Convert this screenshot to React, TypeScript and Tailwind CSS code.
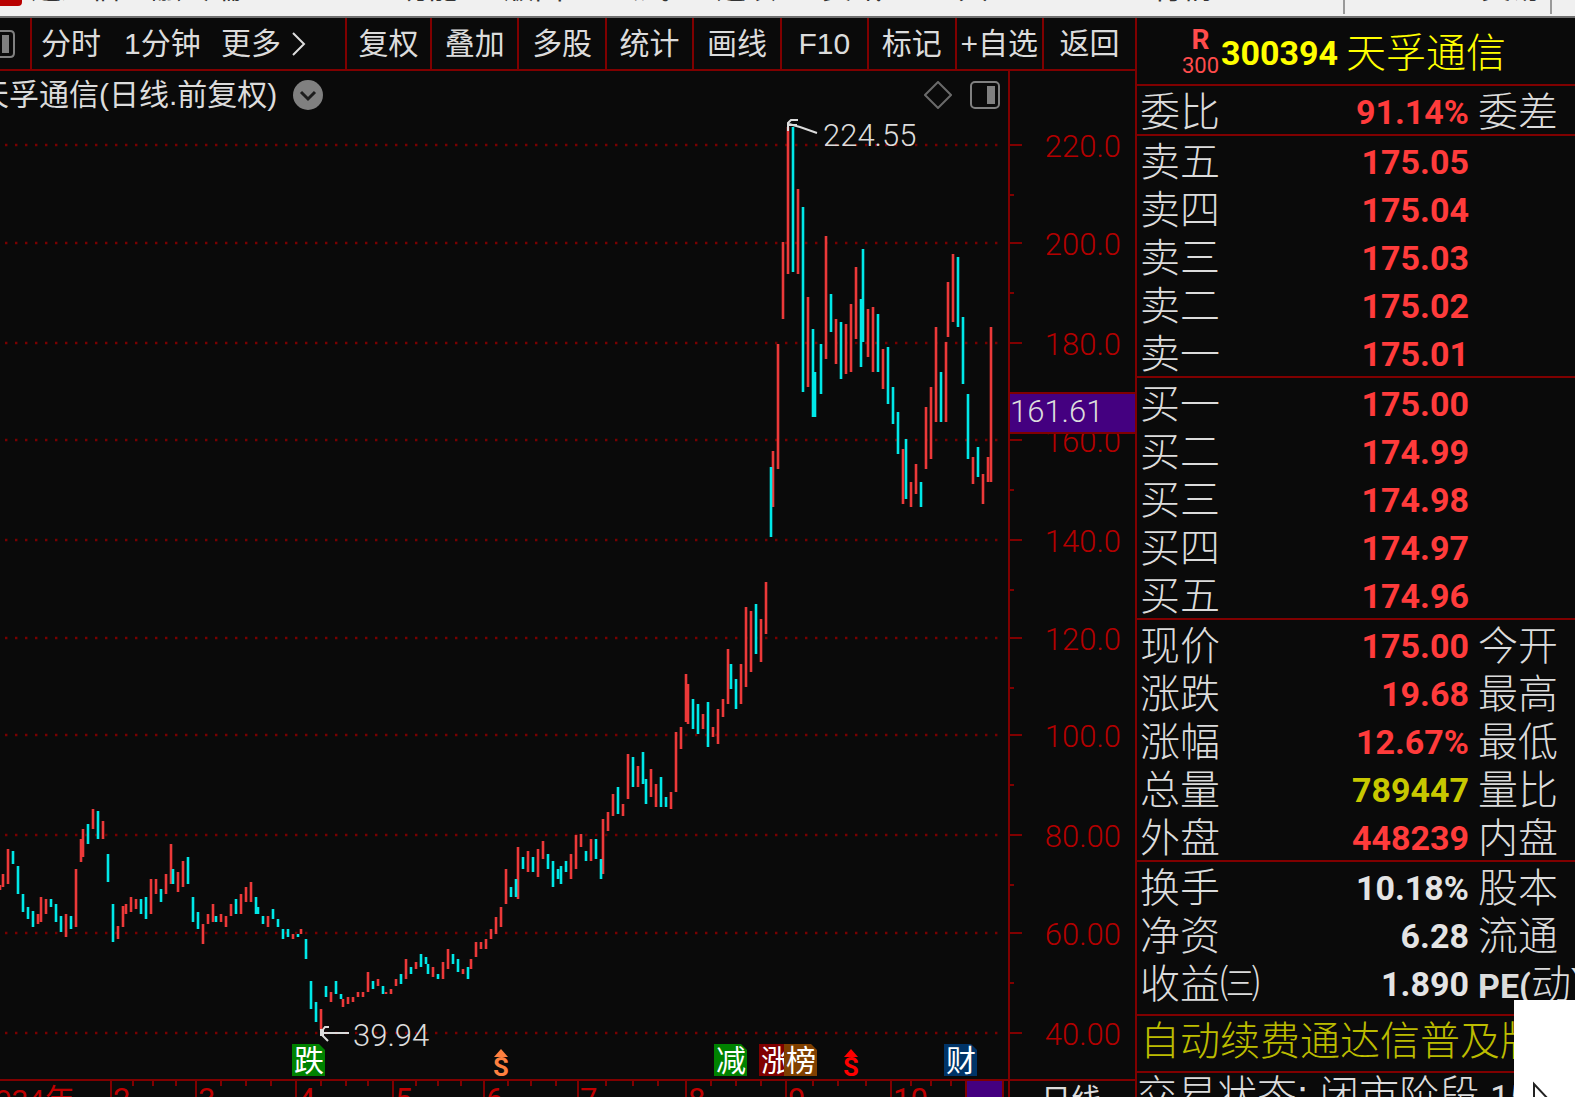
import type { ReactNode } from 'react';

type Tone = 'red' | 'yellow' | 'white';
type QuoteRow = { label: string; value: string; tone: Tone; next?: ReactNode };

const toneClass: Record<Tone, string> = {
  red: 'text-[#ff3b3b]',
  yellow: 'text-[#c8c800]',
  white: 'text-[#e4e4e4]',
};

const menuGroups = ['功能', '版面', '公式', '选项', '资讯', '工具'];
const tools = ['叠加', '多股', '统计', '画线', 'F10', '标记', '+自选'];

const sellRows: QuoteRow[] = [
  { label: '卖五', value: '175.05', tone: 'red' },
  { label: '卖四', value: '175.04', tone: 'red' },
  { label: '卖三', value: '175.03', tone: 'red' },
  { label: '卖二', value: '175.02', tone: 'red' },
  { label: '卖一', value: '175.01', tone: 'red' },
];

const buyRows: QuoteRow[] = [
  { label: '买一', value: '175.00', tone: 'red' },
  { label: '买二', value: '174.99', tone: 'red' },
  { label: '买三', value: '174.98', tone: 'red' },
  { label: '买四', value: '174.97', tone: 'red' },
  { label: '买五', value: '174.96', tone: 'red' },
];

const priceRows: QuoteRow[] = [
  { label: '现价', value: '175.00', tone: 'red', next: '今开' },
  { label: '涨跌', value: '19.68', tone: 'red', next: '最高' },
  { label: '涨幅', value: '12.67%', tone: 'red', next: '最低' },
  { label: '总量', value: '789447', tone: 'yellow', next: '量比' },
  { label: '外盘', value: '448239', tone: 'red', next: '内盘' },
];

const basicRows: QuoteRow[] = [
  { label: '换手', value: '10.18%', tone: 'white', next: '股本' },
  { label: '净资', value: '6.28', tone: 'white', next: '流通' },
  {
    label: '收益㈢',
    value: '1.890',
    tone: 'white',
    next: (
      <>
        <span className="font-[Roboto] text-[34px] font-bold">PE(</span>动)
      </>
    ),
  },
];

// x, high, low of each day; rising days and falling days are drawn separately
const upBars = [
  [0, 885, 890], [3, 874, 887], [8, 849, 884], [38, 914, 924], [41, 897, 922], [46, 899, 914],
  [66, 914, 937], [76, 869, 927], [81, 839, 862], [83, 829, 857], [93, 809, 829], [103, 821, 839],
  [118, 926, 939], [123, 906, 927], [126, 904, 914], [131, 897, 912], [136, 899, 909], [151, 879, 914],
  [156, 879, 894], [166, 874, 894], [171, 844, 884], [178, 872, 892], [183, 861, 887], [203, 924, 944],
  [208, 914, 924], [213, 904, 922], [221, 914, 922], [226, 916, 927], [231, 904, 916], [241, 894, 914],
  [246, 887, 902], [251, 882, 902], [268, 916, 927], [293, 934, 939], [301, 929, 934], [321, 1009, 1030],
  [331, 992, 1002], [343, 999, 1007], [348, 997, 1004], [353, 997, 1002], [358, 992, 997], [363, 992, 997],
  [368, 972, 992], [378, 979, 986], [386, 992, 994], [391, 989, 994], [396, 979, 986], [406, 959, 979],
  [416, 962, 969], [433, 967, 977], [443, 962, 979], [448, 949, 969], [463, 969, 974], [471, 959, 969],
  [476, 942, 957], [481, 942, 949], [486, 939, 949], [491, 929, 939], [496, 917, 934], [501, 907, 927],
  [506, 869, 904], [518, 847, 899], [528, 851, 872], [538, 849, 877], [543, 841, 859], [571, 854, 879],
  [576, 835, 869], [581, 834, 847], [591, 839, 861], [603, 819, 874], [608, 812, 831], [613, 794, 816],
  [623, 804, 816], [628, 754, 799], [638, 766, 787], [651, 769, 797], [656, 784, 807], [671, 792, 809],
  [676, 732, 792], [681, 727, 749], [686, 674, 722], [688, 684, 724], [703, 714, 729], [713, 727, 737],
  [718, 709, 744], [723, 699, 717], [728, 649, 704], [741, 664, 704], [746, 607, 687], [751, 611, 672],
  [761, 619, 662], [766, 582, 634], [773, 451, 507], [778, 344, 469], [783, 242, 319], [788, 127, 274],
  [798, 189, 274], [808, 297, 387], [826, 236, 359], [836, 319, 364], [846, 324, 374], [851, 304, 372],
  [856, 267, 339], [868, 309, 357], [873, 307, 372], [883, 349, 389], [903, 449, 504], [911, 482, 507],
  [916, 464, 494], [926, 407, 469], [931, 387, 459], [936, 327, 422], [946, 342, 422], [948, 282, 337],
  [953, 254, 322], [973, 457, 484], [983, 474, 504], [988, 457, 482], [991, 327, 482],
];

const downBars = [
  [13, 851, 864], [18, 866, 894], [23, 894, 912], [28, 907, 919], [33, 911, 927], [51, 899, 907],
  [56, 904, 922], [61, 916, 932], [71, 916, 929], [88, 824, 844], [98, 811, 839], [108, 854, 882],
  [113, 904, 942], [141, 899, 914], [146, 897, 919], [161, 889, 902], [173, 869, 884], [188, 857, 884],
  [193, 897, 922], [198, 912, 929], [216, 916, 922], [236, 899, 914], [256, 897, 914], [258, 907, 914],
  [263, 916, 924], [273, 909, 919], [278, 919, 927], [283, 929, 939], [288, 929, 937], [298, 934, 937],
  [306, 939, 959], [311, 981, 1009], [316, 1002, 1022], [326, 986, 997], [336, 981, 994], [341, 994, 999],
  [373, 981, 989], [383, 986, 994], [401, 974, 984], [411, 967, 974], [421, 954, 967], [426, 957, 964],
  [428, 964, 974], [438, 974, 979], [453, 954, 964], [458, 959, 972], [468, 967, 979], [511, 887, 897],
  [516, 879, 897], [523, 857, 869], [533, 857, 872], [548, 854, 869], [553, 861, 887], [558, 869, 879],
  [561, 866, 884], [566, 861, 872], [586, 851, 861], [596, 839, 859], [601, 859, 879], [618, 787, 814],
  [633, 757, 787], [643, 752, 784], [646, 779, 804], [661, 777, 807], [666, 797, 807], [693, 699, 729],
  [698, 704, 734], [708, 702, 747], [731, 664, 689], [736, 679, 709], [756, 604, 654], [771, 467, 537],
  [793, 127, 272], [803, 207, 392], [813, 329, 417], [815, 372, 417], [821, 344, 394], [831, 294, 332],
  [841, 322, 379], [861, 299, 367], [863, 249, 342], [878, 314, 372], [888, 347, 404], [893, 387, 424],
  [898, 412, 454], [906, 439, 499], [921, 482, 507], [941, 372, 422], [958, 257, 327], [963, 317, 384],
  [968, 394, 459], [978, 447, 477],
];

const scale = [
  { y: 145, text: '220.0' },
  { y: 243, text: '200.0' },
  { y: 343, text: '180.0' },
  { y: 440, text: '160.0' },
  { y: 540, text: '140.0' },
  { y: 638, text: '120.0' },
  { y: 735, text: '100.0' },
  { y: 835, text: '80.00' },
  { y: 933, text: '60.00' },
  { y: 1033, text: '40.00' },
];
const halfSteps = [195, 293, 393, 490, 590, 688, 785, 885, 983];

const months = [
  { x: 111, text: '2' },
  { x: 196, text: '3' },
  { x: 296, text: '4' },
  { x: 393, text: '5' },
  { x: 484, text: '6' },
  { x: 578, text: '7' },
  { x: 686, text: '8' },
  { x: 786, text: '9' },
  { x: 891, text: '10' },
];
const weeks = [
  133, 153, 176, 221, 246, 271, 321, 346, 368, 416, 438, 461, 508, 531, 556, 606, 633, 658, 711, 736,
  761, 813, 838, 866, 911, 931, 951,
];

const flags = [
  { x: 292, text: '跌', fill: '#008200' },
  { x: 714, text: '减', fill: '#008200' },
  { x: 759, text: '涨', fill: '#800000' },
  { x: 784, text: '榜', fill: '#804000' },
  { x: 944, text: '财', fill: '#003468' },
];
const dividends = [
  { x: 501, fill: '#ff8040' },
  { x: 851, fill: '#ff0000' },
];

const toPath = (bars: number[][]) =>
  bars.map(([x, high, low]) => `M${x} ${high}V${low}`).join('');

function MenuBar() {
  return (
    <header className="h-[18px] shrink-0 overflow-hidden border-b-2 border-[#707070] bg-[#f0f0f0] text-[#333]">
      <div className="flex h-4 items-start">
        <div className="h-[6px] w-[22px] rounded-br-sm bg-[#b80000]" />
        <div className="-mt-7 ml-[9px] w-[367px] shrink-0 text-[30px] leading-[32px]">
          通达信金融终端
        </div>
        <nav className="-mt-7 flex flex-1 gap-[46px] text-[30px] leading-[32px] whitespace-nowrap">
          {menuGroups.map((item) => (
            <a key={item} href="#menu">
              {item}
            </a>
          ))}
        </nav>
        <div className="-mt-7 w-[190px] text-[30px] leading-[32px]">行情</div>
        <div className="h-[14px] w-[2px] bg-[#999]" />
        <div className="-mt-7 w-[205px] pl-[136px] text-[30px] leading-[32px]">交易</div>
        <div className="h-[14px] w-[2px] bg-[#999]" />
        <div className="w-[23px]" />
      </div>
    </header>
  );
}

function Toolbar() {
  return (
    <div className="flex h-[53px] shrink-0 border-b-2 border-[#800000] text-[30px] leading-[50px] whitespace-nowrap text-[#dcdcdc]">
      <button aria-label="侧栏" className="flex w-[32px] shrink-0 items-center border-r-2 border-[#800000]">
        <svg width="15" height="28" viewBox="0 0 15 28" fill="none">
          <path d="M-6 1H10Q14 1 14 5V23Q14 27 10 27H-6" stroke="#808080" strokeWidth="2" />
          <path d="M2 5H9V23H2Z" fill="#808080" />
        </svg>
      </button>
      <div className="flex w-[315px] shrink-0 border-r-2 border-[#800000] pl-[9px]">
        <button className="w-[83px] text-left">分时</button>
        <button className="w-[97px] text-left">1分钟</button>
        <button className="flex items-center gap-[11px]">
          更多
          <svg width="14" height="24" viewBox="0 0 14 24" fill="none">
            <path d="M1 1L12 12L1 23" stroke="#dcdcdc" strokeWidth="2" />
          </svg>
        </button>
      </div>
      <button className="w-[85px] shrink-0 border-r-2 border-[#800000]">复权</button>
      {tools.map((tool) => (
        <button key={tool} className="min-w-0 flex-1 border-r-2 border-[#800000]">
          {tool}
        </button>
      ))}
      <button className="w-[91px] shrink-0">返回</button>
    </div>
  );
}

function ChartTitle() {
  return (
    <div className="flex h-12 shrink-0 items-center pr-[8px] text-[30px] whitespace-nowrap text-[#dcdcdc]">
      <h1 className="-ml-[21px] text-[30px] leading-[46px]">天孚通信(日线.前复权)</h1>
      <button aria-label="更多周期" className="ml-4">
        <svg width="30" height="30" viewBox="0 0 30 30" fill="none">
          <circle cx="15" cy="15" r="15" fill="#808080" />
          <path d="M8 12L15 19L22 12" stroke="#1c1c1c" strokeWidth="3" />
        </svg>
      </button>
      <div className="ml-auto flex gap-[18px]">
        <button aria-label="标注">
          <svg width="28" height="28" viewBox="0 0 28 28" fill="none">
            <path d="M14 1L27 14L14 27L1 14Z" stroke="#6a6a6a" strokeWidth="2" />
          </svg>
        </button>
        <button aria-label="右侧栏">
          <svg width="30" height="28" viewBox="0 0 30 28" fill="none">
            <rect x="1" y="1" width="28" height="26" rx="4" stroke="#808080" strokeWidth="2" />
            <path d="M17 5H25V23H17Z" fill="#808080" />
          </svg>
        </button>
      </div>
    </div>
  );
}

function PriceChart() {
  return (
    <svg
      viewBox="0 119 1008 960"
      preserveAspectRatio="xMinYMin meet"
      className="min-h-0 w-full flex-1"
      fill="none"
    >
      {scale.map(({ y }) => (
        <path key={y} d={`M5 ${y}H998`} stroke="#780000" strokeWidth="2.4" strokeDasharray="2.4 7.6" />
      ))}
      <path d={toPath(upBars)} stroke="#ec3939" strokeWidth="2.6" />
      <path d={toPath(downBars)} stroke="#00e8e8" strokeWidth="2.6" />

      <path d="M798 120H791L788 123V131M789 124L800 127L817 133" stroke="#dcdcdc" strokeWidth="2" />
      <path d="M788 125H797" stroke="#dcdcdc" strokeWidth="2" />
      <text x="823" y="146" className="fill-[#dcdcdc] font-[Roboto] text-[31px] font-light">
        224.55
      </text>
      <path d="M322 1033H349M329 1027H325L322 1031M322 1035L328 1041" stroke="#dcdcdc" strokeWidth="2" />
      <path d="M320 1029H324V1036H320Z" fill="#dcdcdc" />
      <text x="353" y="1046" className="fill-[#dcdcdc] font-[Roboto] text-[31px] font-light">
        39.94
      </text>

      {flags.map(({ x, text, fill }) => (
        <g key={text}>
          <path d={`M${x} 1044H${x + 27}L${x + 33} 1050V1076H${x}Z`} fill={fill} />
          <text x={x + 2} y="1071" className="fill-white text-[30px]">
            {text}
          </text>
        </g>
      ))}
      {dividends.map(({ x, fill }) => (
        <g key={x} fill={fill}>
          <path d={`M${x} 1049L${x + 7} 1057H${x - 7}Z`} />
          <text x={x} y="1076" textAnchor="middle" className="font-[Roboto] text-[25px] font-bold">
            S
          </text>
        </g>
      ))}
    </svg>
  );
}

function PriceScale() {
  return (
    <svg
      viewBox="1010 71 125 1008"
      preserveAspectRatio="xMinYMin meet"
      className="w-[127px] shrink-0 border-l-2 border-[#800000]"
      fill="none"
    >
      {scale.map(({ y, text }) => (
        <g key={text}>
          <path d={`M1009 ${y}H1022`} stroke="#800000" strokeWidth="2" />
          <text
            x="1121"
            y={y + 12}
            textAnchor="end"
            className="fill-[#b40000] font-[Roboto] text-[31px] font-light"
          >
            {text}
          </text>
        </g>
      ))}
      {halfSteps.map((y) => (
        <path key={y} d={`M1009 ${y}H1014`} stroke="#800000" strokeWidth="2" />
      ))}
      <path d="M1008 393H1136V433H1008Z" fill="#440080" stroke="#800000" strokeWidth="2" />
      <text x="1010" y="422" className="fill-[#dcdcdc] font-[Roboto] text-[31px] font-light">
        161.61
      </text>
    </svg>
  );
}

function TimeAxis() {
  return (
    <div className="flex h-[18px] shrink-0 overflow-hidden border-t-2 border-[#800000]">
      <svg viewBox="0 1081 1008 16" preserveAspectRatio="xMinYMin meet" className="min-w-0 flex-1">
        <text x="-22" y="1110" className="fill-[#c00000] text-[30px]">
          2024年
        </text>
        {months.map(({ x, text }) => (
          <g key={x}>
            <path d={`M${x} 1081V1097`} stroke="#800000" strokeWidth="2" />
            <text x={x + 2} y="1110" className="fill-[#c00000] font-[Roboto] text-[31px]">
              {text}
            </text>
          </g>
        ))}
        {weeks.map((x) => (
          <path key={x} d={`M${x} 1081V1086`} stroke="#800000" strokeWidth="2" />
        ))}
        <path d="M966 1081H1003V1097H966Z" fill="#440080" />
        <path d="M966 1081V1097M1003 1081V1097" stroke="#800000" strokeWidth="2" />
      </svg>
      <button className="flex w-[127px] shrink-0 border-l-2 border-[#800000] pl-[31px] text-[30px] leading-[38px] text-[#dcdcdc]">
        日线
      </button>
    </div>
  );
}

function QuoteTable({ rows, className = '' }: { rows: QuoteRow[]; className?: string }) {
  return (
    <div className={`border-b-2 border-[#800000] ${className}`}>
      <table className="w-full table-fixed text-[40px] leading-[52px] whitespace-nowrap text-[#dcdcdc]">
        <tbody>
          {rows.map(({ label, value, tone, next }) => (
            <tr key={label} className="h-12">
              <th scope="row" className="h-12 w-[130px] p-0 pl-[3px] text-left font-light">
                <div className="h-12">{label}</div>
              </th>
              <td className={`h-12 p-0 pr-[9px] text-right font-[Roboto] text-[34px] font-bold ${toneClass[tone]}`}>
                <div className="h-12">{value}</div>
              </td>
              <th scope="row" className="h-12 w-[97px] p-0 text-left font-light">
                <div className="h-12">{next}</div>
              </th>
            </tr>
          ))}
        </tbody>
      </table>
    </div>
  );
}

function QuotePanel() {
  return (
    <aside className="w-[440px] shrink-0 overflow-hidden border-l-2 border-[#800000] whitespace-nowrap">
      <div className="flex h-[68px] items-center border-b-2 border-[#800000] pt-1 pl-[43px] text-[#ffff00]">
        <div className="flex w-[41px] flex-col items-center font-[Roboto] leading-[26px] text-[#ff4c4c]">
          <b className="text-[28px]">R</b>
          <span className="text-[22px]">300</span>
        </div>
        <b className="font-[Roboto] text-[34px]">300394</b>
        <h2 className="ml-2 text-[40px] leading-[64px] font-light">天孚通信</h2>
      </div>
      <QuoteTable rows={[{ label: '委比', value: '91.14%', tone: 'red', next: '委差' }]} />
      <QuoteTable rows={sellRows} />
      <QuoteTable rows={buyRows} />
      <QuoteTable rows={priceRows} />
      <QuoteTable rows={basicRows} className="pb-2" />
      <p className="h-[57px] border-b-2 border-[#800000] pl-[3px] text-[40px] leading-[50px] font-light text-[#bcbc00]">
        自动续费通达信普及版
      </p>
      <p className="text-[40px] leading-[44px] font-light text-[#dcdcdc]">
        交易状态: 闭市阶段 <b className="font-[Roboto] text-[34px]">15:00</b>
      </p>
    </aside>
  );
}

export default function App() {
  return (
    <div className="relative flex h-screen flex-col overflow-hidden bg-[#0a0a0a] font-['Liberation_Sans','Noto_Sans_CJK_SC',sans-serif]">
      <MenuBar />
      <div className="flex min-h-0 flex-1">
        <main className="flex min-w-0 flex-1 flex-col">
          <Toolbar />
          <div className="flex min-h-0 flex-1">
            <section className="flex min-w-0 flex-1 flex-col overflow-hidden">
              <ChartTitle />
              <PriceChart />
            </section>
            <PriceScale />
          </div>
          <TimeAxis />
        </main>
        <QuotePanel />
      </div>
      <div className="absolute right-0 bottom-0 h-[97px] w-[61px] overflow-hidden bg-white">
        <svg width="61" height="97" viewBox="0 0 61 97" fill="none">
          <path d="M20 84V106L26 101L36 101Z" fill="#fff" stroke="#222" strokeWidth="2" />
        </svg>
      </div>
    </div>
  );
}
